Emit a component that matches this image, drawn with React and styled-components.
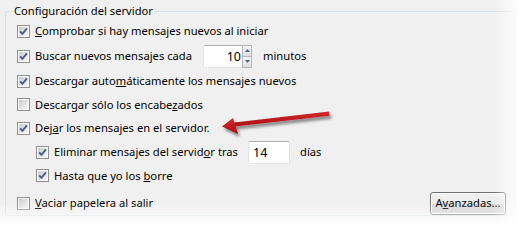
import styled, { createGlobalStyle } from "styled-components";

const Global = createGlobalStyle`
  html, body {
    margin: 0;
    padding: 0;
    background: #ffffff;
  }
  body {
    font-family: "Noto Sans", "Open Sans", sans-serif;
    font-size: 11.2px;
    color: #000;
  }
`;

const Panel = styled.div`
  position: relative;
  width: 519px;
  height: 225px;
  box-sizing: border-box;
  padding-top: 3px;
  background: #f0f0f0;
  overflow: hidden;

  &::after {
    content: "";
    position: absolute;
    inset: 0;
    pointer-events: none;
    background:
      linear-gradient(to right, rgba(255, 255, 255, 0) 494px, rgba(255, 255, 255, 0.92) 519px),
      linear-gradient(to bottom, rgba(255, 255, 255, 0) 204px, rgba(255, 255, 255, 0.92) 225px);
  }
`;

const GroupBox = styled.fieldset`
  margin: 0 4px 0 5px;
  padding: 0 8px 0 11px;
  min-width: 0;
  border: 1px solid #d5dfe5;
  border-radius: 3px;
  height: 213px;
  box-sizing: border-box;
`;

const Legend = styled.legend`
  margin-left: -5px;
  padding: 0 2px;
  line-height: 16px;
  height: 16px;
`;

const Row = styled.div`
  display: flex;
  align-items: center;
  height: ${(p) => p.h || 24}px;
  padding-left: ${(p) => (p.indent ? 19 : 0)}px;
  margin-top: ${(p) => p.gap || 0}px;
  justify-content: ${(p) => (p.spread ? "space-between" : "flex-start")};
`;

const Check = styled.label`
  display: flex;
  align-items: center;
  gap: 5px;
  white-space: nowrap;
  flex: none;
  width: ${(p) => (p.w ? `${p.w}px` : "auto")};
  line-height: 16px;
`;

const TextBox = styled.div`
  box-sizing: border-box;
  width: ${(p) => p.w}px;
  height: 23px;
  background: #fff;
  border: 1px solid #e2e3ea;
  border-top-color: #abadb3;
  border-bottom-color: #e3e9ef;
  border-radius: 2px;
  display: flex;
  align-items: center;
  justify-content: ${(p) => (p.right ? "flex-end" : "flex-start")};
  padding: 0 ${(p) => (p.right ? 1 : 4)}px 0 4px;
  font-size: 12.5px;
`;

const Spinner = styled.div`
  display: flex;
  align-items: stretch;
  height: 23px;
`;

const SpinButtons = styled.div`
  display: flex;
  flex-direction: column;
  width: 10px;
  margin-left: -1px;
`;

const SpinButton = styled.div`
  flex: 1;
  display: flex;
  align-items: center;
  justify-content: center;
  border: 1px solid #b4b6bc;
  border-top-width: ${(p) => (p.down ? 0 : 1)}px;
  background: linear-gradient(#f6f6f6, #dedede);
`;

const Unit = styled.span`
  margin-left: ${(p) => p.gap}px;
  line-height: 16px;
`;

const Button = styled.div`
  box-sizing: border-box;
  width: 76px;
  height: 23px;
  display: flex;
  align-items: center;
  justify-content: center;
  border: 1px solid #707070;
  border-radius: 3px;
  box-shadow: inset 0 0 0 1px #fcfcfc;
  background: linear-gradient(#f2f2f2 0%, #ebebeb 50%, #dddddd 51%, #cfcfcf 100%);
  line-height: 16px;
`;

const ArrowLayer = styled.svg`
  position: absolute;
  left: 214px;
  top: 104px;
  pointer-events: none;
`;

const Box = ({ checked }) => (
  <svg width="13" height="13" viewBox="0 0 13 13">
    <defs>
      <linearGradient id="cbg" x1="0" y1="0" x2="1" y2="1">
        <stop offset="0" stopColor="#cbcbcb" />
        <stop offset="1" stopColor="#f7f7f7" />
      </linearGradient>
    </defs>
    <rect x="0.5" y="0.5" width="12" height="12" fill="#fff" stroke="#8e8f8f" />
    <rect x="2" y="2" width="9" height="9" fill="url(#cbg)" />
    {checked && (
      <path
        d="M3.2 6.4 L5.4 8.8 L9.9 3.3"
        fill="none"
        stroke="#4a5d8c"
        strokeWidth="1.9"
        strokeLinejoin="round"
      />
    )}
  </svg>
);

const Option = ({ checked, w, children }) => (
  <Check w={w}>
    <Box checked={checked} />
    <span>{children}</span>
  </Check>
);

const Tri = ({ up }) => (
  <svg width="5" height="3" viewBox="0 0 5 3">
    <path d={up ? "M0 3 L2.5 0 L5 3 Z" : "M0 0 L2.5 3 L5 0 Z"} fill="#4d6185" />
  </svg>
);

export default function App() {
  return (
    <>
      <Global />
      <Panel>
        <GroupBox>
          <Legend>Configuración del servidor</Legend>
          <Row>
            <Option checked>
              <u>C</u>omprobar si hay mensajes nuevos al iniciar
            </Option>
          </Row>
          <Row h={26}>
            <Option checked w={186}>
              Buscar nuevos mensa<u>j</u>es cada
            </Option>
            <Spinner>
              <TextBox w={40} right>
                10
              </TextBox>
              <SpinButtons>
                <SpinButton>
                  <Tri up />
                </SpinButton>
                <SpinButton down>
                  <Tri />
                </SpinButton>
              </SpinButtons>
            </Spinner>
            <Unit gap={11}>minutos</Unit>
          </Row>
          <Row>
            <Option checked>
              Descargar auto<u>m</u>áticamente los mensajes nuevos
            </Option>
          </Row>
          <Row h={23}>
            <Option>
              Descargar sólo los encabe<u>z</u>ados
            </Option>
          </Row>
          <Row>
            <Option checked>
              Dej<u>a</u>r los mensajes en el servidor.
            </Option>
          </Row>
          <Row indent>
            <Option checked w={212}>
              Eliminar mensajes del servid<u>o</u>r tras
            </Option>
            <TextBox w={42}>14</TextBox>
            <Unit gap={10}>días</Unit>
          </Row>
          <Row indent h={23}>
            <Option checked>
              Hasta que yo los <u>b</u>orre
            </Option>
          </Row>
          <Row spread gap={4}>
            <Option>
              <u>V</u>aciar papelera al salir
            </Option>
            <Button>
              A<u>v</u>anzadas...
            </Button>
          </Row>
        </GroupBox>
        <ArrowLayer width="125" height="40" viewBox="0 0 125 40">
          <defs>
            <filter id="sh" x="-20%" y="-50%" width="140%" height="200%">
              <feGaussianBlur in="SourceAlpha" stdDeviation="1.6" />
              <feOffset dx="2" dy="3" result="b" />
              <feComponentTransfer>
                <feFuncA type="linear" slope="0.45" />
              </feComponentTransfer>
              <feMerge>
                <feMergeNode />
                <feMergeNode in="SourceGraphic" />
              </feMerge>
            </filter>
            <linearGradient id="ar" x1="0" y1="0" x2="0" y2="1">
              <stop offset="0" stopColor="#d42a2a" />
              <stop offset="1" stopColor="#a90e14" />
            </linearGradient>
          </defs>
          <g filter="url(#sh)">
            <path d="M115 7.6 L20 18.4 L20.6 22.6 L115.5 11.8 Z" fill="url(#ar)" />
            <path d="M8 22.5 L19 14 L21 20.5 L24 30 Z" fill="url(#ar)" />
          </g>
        </ArrowLayer>
      </Panel>
    </>
  );
}
